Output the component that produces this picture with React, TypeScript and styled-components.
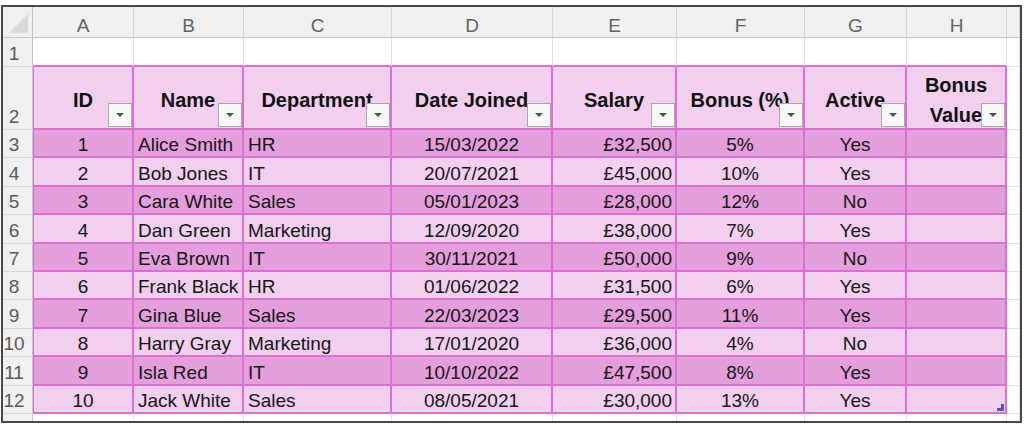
import React from 'react';
import styled, { createGlobalStyle, css } from 'styled-components';

const GlobalStyle = createGlobalStyle`
  html, body { margin: 0; padding: 0; background: #ffffff; }
  body { font-family: "Liberation Sans", Arial, sans-serif; }
  * { box-sizing: border-box; }
`;

const PINK = '#da70d0';
const GRID = '#e1e1e1';
const HEAD_BG = '#f0f0f0';
const HEAD_LINE = '#c6c6c6';

const Page = styled.div`
  width: 1024px;
  height: 424px;
  padding: 5px 0 0 1px;
  overflow: hidden;
`;

const Frame = styled.div`
  width: 1021px;
  height: 418px;
  border: 2px solid #474747;
  overflow: hidden;
  background: #ffffff;
`;

const Sheet = styled.div`
  display: grid;
  grid-template-columns: 30px 101px 110px 148px 161px 124px 128px 102px 100px 13px;
  grid-template-rows: 31px 29px 63px repeat(10, 28.4px) 28px;
  height: 414px;
  overflow: hidden;
`;

const Corner = styled.div`
  background: ${HEAD_BG};
  border-right: 1px solid ${HEAD_LINE};
  border-bottom: 1px solid ${HEAD_LINE};
  display: flex;
  align-items: flex-end;
  justify-content: flex-end;
  padding: 0 4px 4px 0;
`;

const ColHead = styled.div`
  background: ${HEAD_BG};
  border-bottom: 1px solid ${HEAD_LINE};
  border-right: 1px solid #d8d8d8;
  display: flex;
  align-items: flex-end;
  justify-content: center;
  font-size: 19px;
  line-height: 20px;
  color: #636363;
  padding-bottom: 1px;
`;

const RowHead = styled.div<{ $clip?: boolean }>`
  background: ${HEAD_BG};
  border-right: 1px solid ${HEAD_LINE};
  border-bottom: 1px solid #d8d8d8;
  display: flex;
  align-items: ${(p) => (p.$clip ? 'flex-start' : 'flex-end')};
  justify-content: center;
  font-size: 19px;
  line-height: 20px;
  color: #5a5a5a;
  padding: ${(p) => (p.$clip ? '4px 7px 0 0' : '0 7px 2px 0')};
`;

const BlankCell = styled.div<{ $pinkBottom?: boolean }>`
  background: #ffffff;
  border-right: 1px solid ${GRID};
  border-bottom: 1px solid ${GRID};
  ${(p) =>
    p.$pinkBottom &&
    css`
      border-bottom: 2px solid ${PINK};
    `}
`;

const HeaderCell = styled.div<{ $first?: boolean }>`
  position: relative;
  background: #f2ceef;
  border-right: 2px solid ${PINK};
  border-bottom: 2px solid ${PINK};
  ${(p) =>
    p.$first &&
    css`
      border-left: 1px solid ${PINK};
    `}
  display: flex;
  align-items: center;
  justify-content: center;
  text-align: center;
  padding: 4px 2px 0;
  font-size: 20px;
  font-weight: 700;
  line-height: 30px;
  color: #111111;
`;

const FilterButton = styled.div`
  position: absolute;
  right: 0;
  bottom: 1px;
  width: 24px;
  height: 24px;
  border: 1px solid #a9a9a9;
  background: #f8f8f8;
  display: flex;
  align-items: center;
  justify-content: center;
`;

type Align = 'left' | 'center' | 'right';

const DataCell = styled.div<{ $dark: boolean; $align: Align; $first?: boolean }>`
  position: relative;
  background: ${(p) => (p.$dark ? '#e59edc' : '#f2ceef')};
  border-right: 2px solid ${PINK};
  border-bottom: 2px solid ${PINK};
  ${(p) =>
    p.$first &&
    css`
      border-left: 1px solid ${PINK};
    `}
  display: flex;
  align-items: flex-end;
  justify-content: ${(p) =>
    p.$align === 'left' ? 'flex-start' : p.$align === 'right' ? 'flex-end' : 'center'};
  padding: ${(p) =>
    p.$align === 'left' ? '0 2px 1px 4px' : p.$align === 'right' ? '0 3px 1px 2px' : '0 2px 1px'};
  font-size: 19px;
  line-height: 20px;
  color: #161616;
  white-space: nowrap;
`;

const ResizeHandle = styled.svg`
  position: absolute;
  right: 1px;
  bottom: 1px;
`;

const FilterArrow = () => (
  <svg width="10" height="6" viewBox="0 0 10 6">
    <polygon points="1,1 9,1 5,5" fill="#505050" />
  </svg>
);

const CornerTriangle = () => (
  <svg width="19" height="19" viewBox="0 0 19 19">
    <polygon points="19,0 19,19 0,19" fill="#d9d9d9" />
  </svg>
);

const letters = ['A', 'B', 'C', 'D', 'E', 'F', 'G', 'H', ''];
const headers = ['ID', 'Name', 'Department', 'Date Joined', 'Salary', 'Bonus (%)', 'Active', 'Bonus Value'];
const aligns: Align[] = ['center', 'left', 'left', 'center', 'right', 'center', 'center', 'center'];

const rows: (string | number)[][] = [
  [1, 'Alice Smith', 'HR', '15/03/2022', '£32,500', '5%', 'Yes', ''],
  [2, 'Bob Jones', 'IT', '20/07/2021', '£45,000', '10%', 'Yes', ''],
  [3, 'Cara White', 'Sales', '05/01/2023', '£28,000', '12%', 'No', ''],
  [4, 'Dan Green', 'Marketing', '12/09/2020', '£38,000', '7%', 'Yes', ''],
  [5, 'Eva Brown', 'IT', '30/11/2021', '£50,000', '9%', 'No', ''],
  [6, 'Frank Black', 'HR', '01/06/2022', '£31,500', '6%', 'Yes', ''],
  [7, 'Gina Blue', 'Sales', '22/03/2023', '£29,500', '11%', 'Yes', ''],
  [8, 'Harry Gray', 'Marketing', '17/01/2020', '£36,000', '4%', 'No', ''],
  [9, 'Isla Red', 'IT', '10/10/2022', '£47,500', '8%', 'Yes', ''],
  [10, 'Jack White', 'Sales', '08/05/2021', '£30,000', '13%', 'Yes', ''],
];

export default function App() {
  return (
    <Page>
      <GlobalStyle />
      <Frame>
        <Sheet>
          <Corner>
            <CornerTriangle />
          </Corner>
          {letters.map((l, i) => (
            <ColHead key={`c${i}`}>{l}</ColHead>
          ))}

          <RowHead>1</RowHead>
          {letters.map((l, i) => (
            <BlankCell key={`r1${i}`} $pinkBottom={i < 8} />
          ))}

          <RowHead>2</RowHead>
          {headers.map((h, i) => (
            <HeaderCell key={`h${i}`} $first={i === 0}>
              {h}
              <FilterButton>
                <FilterArrow />
              </FilterButton>
            </HeaderCell>
          ))}
          <BlankCell />

          {rows.map((r, ri) => (
            <React.Fragment key={`row${ri}`}>
              <RowHead>{ri + 3}</RowHead>
              {r.map((v, ci) => (
                <DataCell key={ci} $dark={ri % 2 === 0} $align={aligns[ci]} $first={ci === 0}>
                  {v}
                  {ri === rows.length - 1 && ci === 7 && (
                    <ResizeHandle width="7" height="7" viewBox="0 0 7 7">
                      <polygon points="4,0 7,0 7,7 0,7 0,4 4,4" fill="#4a5bc0" />
                    </ResizeHandle>
                  )}
                </DataCell>
              ))}
              <BlankCell />
            </React.Fragment>
          ))}

          <RowHead $clip>13</RowHead>
          {letters.map((l, i) => (
            <BlankCell key={`r13${i}`} />
          ))}
        </Sheet>
      </Frame>
    </Page>
  );
}
